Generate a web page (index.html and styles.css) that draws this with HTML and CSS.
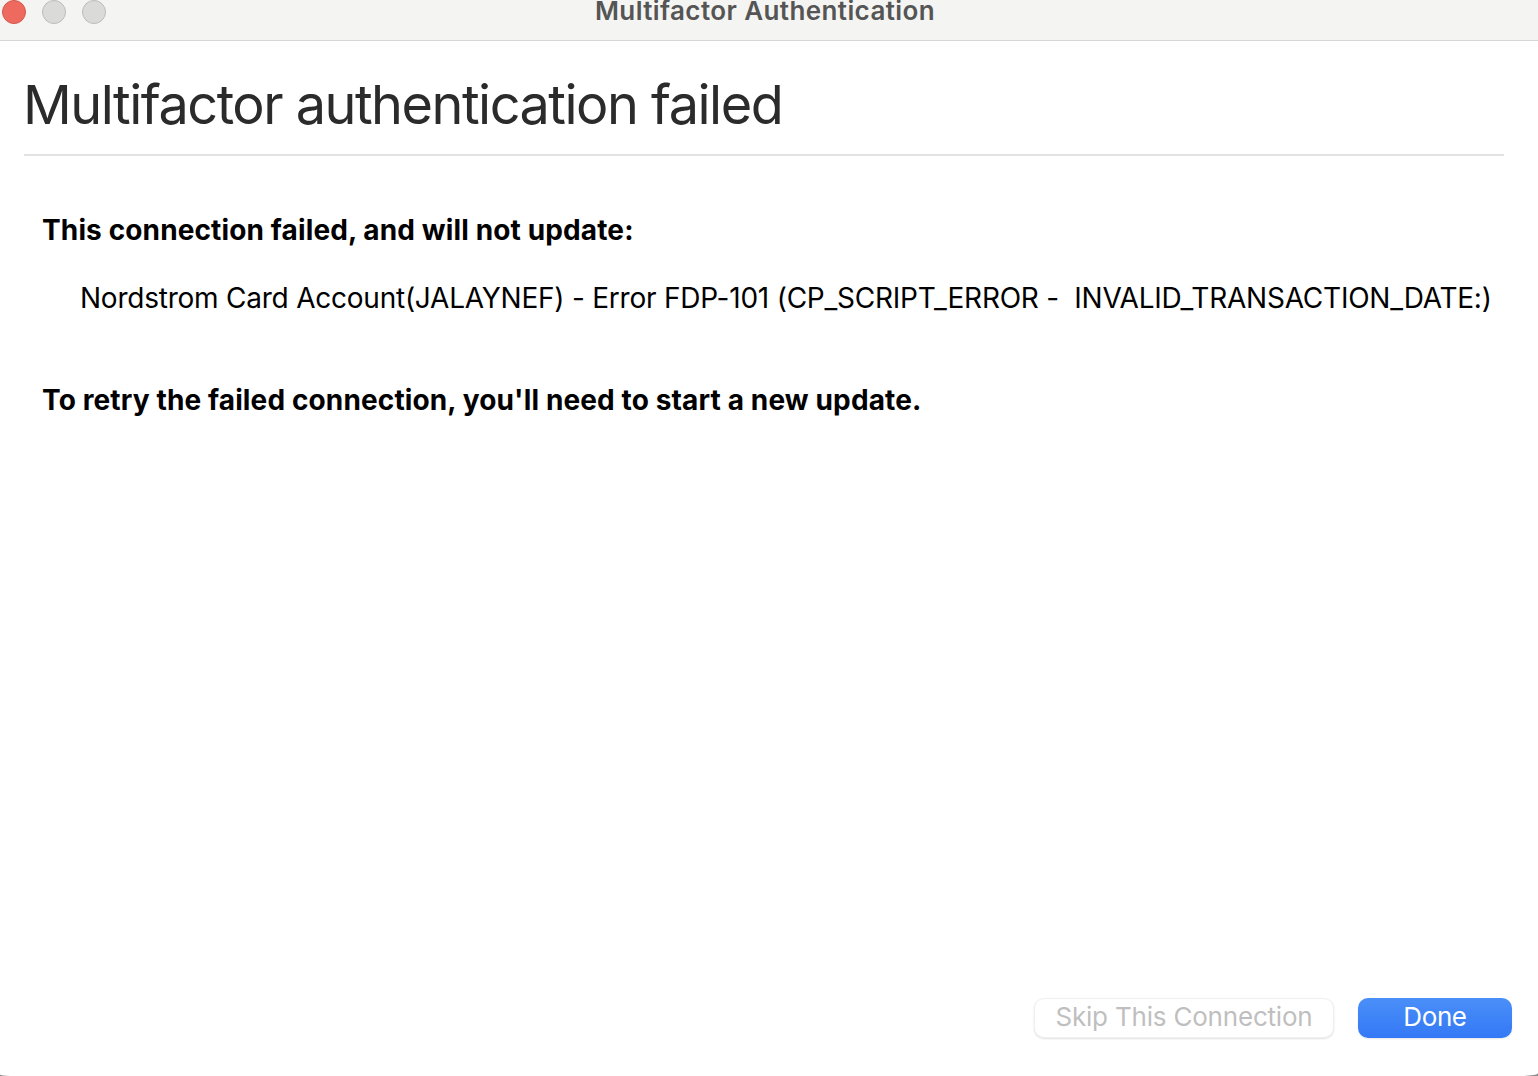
FILE: index.html
```html
<!DOCTYPE html>
<html lang="en">
<head>
    <meta charset="UTF-8">
    <title>Multifactor Authentication</title>
    <link rel="stylesheet" href="styles.css">
</head>
<body>

<div class="window">
    <div class="titlebar">
        <div class="lights">
            <span class="light light-close"></span>
            <span class="light"></span>
            <span class="light"></span>
        </div>
        <div class="window-title">Multifactor Authentication</div>
    </div>

    <div class="content">
        <h1>Multifactor authentication failed</h1>
        <div class="message">
            <p class="strong first">This connection failed, and will not update:</p>
            <p class="error">Nordstrom Card Account(JALAYNEF) - Error FDP-101 (CP_SCRIPT_ERROR -&nbsp; INVALID_TRANSACTION_DATE:)</p>
            <p class="strong">To retry the failed connection, you'll need to start a new update.</p>
        </div>
    </div>

    <div class="footer">
        <button class="btn btn-disabled">Skip This Connection</button>
        <button class="btn btn-primary">Done</button>
    </div>
</div>

</body>
</html>
```

FILE: styles.css
```css
html, body {
    margin: 0;
    height: 100%;
    overflow: hidden;
    background: #8a8a8a; /* only shows in the bottom window corners */
}
body {
    font-family: Inter, "Liberation Sans", Arial, sans-serif;
    color: #000;
}
.window {
    height: 1076px;
    display: flex;
    flex-direction: column;
    background: #fff;
    border-radius: 0 0 16px 10px / 0 0 3px 1.5px;
}
.titlebar {
    height: 40px;
    flex: none;
    background: #f4f4f2;
    border-bottom: 1px solid #d6d6d6;
    display: flex;
    justify-content: center;
    position: relative;
}
.lights {
    position: absolute;
    left: 2px;
    top: 0;
    display: flex;
    gap: 16px;
}
.light {
    width: 24px;
    height: 24px;
    box-sizing: border-box;
    border-radius: 50%;
    background: #dadad8;
    border: 1px solid #bcbcba;
}
.light-close {
    background: #ee6a5f;
    border-color: #d4574d;
}
.window-title {
    font-size: 26px;
    line-height: 22px;
    font-weight: 600;
    letter-spacing: 0.4px;
    color: #555;
    margin-right: 8px;
}
.content {
    flex: 1;
    padding: 0 34px 0 24px;
}
h1 {
    margin: 0;
    height: 115px;
    box-sizing: border-box;
    padding-top: 32px;
    font-size: 54px;
    line-height: 64px;
    font-weight: 400;
    letter-spacing: -1.5px;
    text-indent: -1px;
    color: #2b2b2b;
    border-bottom: 2px solid #e2e2e2;
}
.message {
    padding-left: 18px;
}
.message p {
    margin: 0;
    font-size: 28px;
    line-height: 34px;
}
.strong {
    font-weight: 700;
    letter-spacing: 0.13px;
}
.message .first {
    margin-top: 57px;
}
.message .error {
    margin-top: 34px;
    margin-left: 38px;
    white-space: nowrap;
    letter-spacing: -0.23px;
}
.message .error + .strong {
    margin-top: 68px;
}
.footer {
    flex: none;
    height: 78px;
    box-sizing: border-box;
    padding-right: 26px;
    display: flex;
    justify-content: flex-end;
    align-items: flex-start;
    gap: 24px;
}
.btn {
    height: 40px;
    border-radius: 10px;
    font-family: Inter, "Liberation Sans", sans-serif;
    font-size: 26px;
    letter-spacing: -0.2px;
    padding: 0 0 4px;
}
.btn-disabled {
    width: 300px;
    background: #fff;
    color: #bfbfbf;
    border: 1px solid #f0f0f0;
    box-shadow: 0 1px 2px rgba(0, 0, 0, 0.12);
}
.btn-primary {
    width: 154px;
    color: #fff;
    border: none;
    letter-spacing: -0.4px;
    background: linear-gradient(#4a8ff8, #3478f6);
    box-shadow: 0 1px 2px rgba(0, 0, 0, 0.1);
}
```
